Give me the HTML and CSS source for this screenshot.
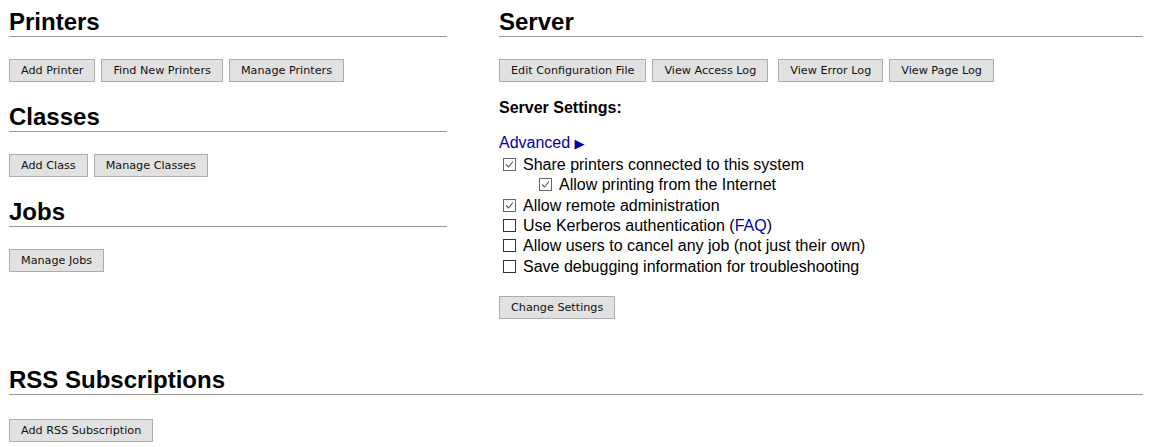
FILE: index.html
```html
<!DOCTYPE html>
<html>
<head>
<meta charset="utf-8">
<title>Administration - CUPS</title>
<link rel="stylesheet" href="styles.css">
</head>
<body>
<div class="page">
  <div class="columns">
    <div class="col-left">
      <section class="section">
        <h2 class="title">Printers</h2>
        <div class="buttons">
          <button class="btn">Add Printer</button>
          <button class="btn">Find New Printers</button>
          <button class="btn">Manage Printers</button>
        </div>
      </section>
      <section class="section">
        <h2 class="title">Classes</h2>
        <div class="buttons">
          <button class="btn">Add Class</button>
          <button class="btn">Manage Classes</button>
        </div>
      </section>
      <section class="section">
        <h2 class="title">Jobs</h2>
        <div class="buttons">
          <button class="btn">Manage Jobs</button>
        </div>
      </section>
    </div>
    <div class="col-right">
      <h2 class="title">Server</h2>
      <div class="buttons">
        <button class="btn">Edit Configuration File</button>
        <button class="btn">View Access Log</button>
        <button class="btn wide-gap">View Error Log</button>
        <button class="btn">View Page Log</button>
      </div>
      <p class="settings-title">Server Settings:</p>
      <div class="settings">
        <div class="row"><a class="link" href="#">Advanced&nbsp;<span class="tri">&#9654;</span></a></div>
        <div class="row opt"><svg class="cb" viewBox="0 0 13 13" width="13" height="13"><rect x="0.5" y="0.5" width="12" height="12" fill="#fff" stroke="#666"/><polyline points="3,6.5 5.5,9 10,3.5" fill="none" stroke="#555" stroke-width="1.1"/></svg>Share printers connected to this system</div>
        <div class="row opt sub"><svg class="cb" viewBox="0 0 13 13" width="13" height="13"><rect x="0.5" y="0.5" width="12" height="12" fill="#fff" stroke="#666"/><polyline points="3,6.5 5.5,9 10,3.5" fill="none" stroke="#555" stroke-width="1.1"/></svg>Allow printing from the Internet</div>
        <div class="row opt"><svg class="cb" viewBox="0 0 13 13" width="13" height="13"><rect x="0.5" y="0.5" width="12" height="12" fill="#fff" stroke="#666"/><polyline points="3,6.5 5.5,9 10,3.5" fill="none" stroke="#555" stroke-width="1.1"/></svg>Allow remote administration</div>
        <div class="row opt"><svg class="cb" viewBox="0 0 13 13" width="13" height="13"><rect x="0.5" y="0.5" width="12" height="12" fill="#fff" stroke="#333"/></svg>Use Kerberos authentication (<a class="link" href="#">FAQ</a>)</div>
        <div class="row opt"><svg class="cb" viewBox="0 0 13 13" width="13" height="13"><rect x="0.5" y="0.5" width="12" height="12" fill="#fff" stroke="#333"/></svg>Allow users to cancel any job (not just their own)</div>
        <div class="row opt"><svg class="cb" viewBox="0 0 13 13" width="13" height="13"><rect x="0.5" y="0.5" width="12" height="12" fill="#fff" stroke="#333"/></svg>Save debugging information for troubleshooting</div>
      </div>
      <div class="buttons submit">
        <button class="btn">Change Settings</button>
      </div>
    </div>
  </div>
  <section class="rss">
    <h2 class="title">RSS Subscriptions</h2>
    <div class="buttons rss-buttons">
      <button class="btn">Add RSS Subscription</button>
    </div>
  </section>
</div>
</body>
</html>
```

FILE: styles.css
```css
html, body {
  margin: 0;
  padding: 0;
  background: #fff;
}
body {
  font-family: "Liberation Sans", Arial, sans-serif;
  font-size: 16px;
  color: #000;
}
.page {
  padding: 8px 10px 0 9px;
}
.columns {
  display: grid;
  grid-template-columns: 438px 644px;
  column-gap: 52px;
  align-items: start;
}
.title {
  margin: 0;
  font-size: 24px;
  font-weight: bold;
  line-height: 28px;
  border-bottom: 1px solid #9a9a9a;
}
.section + .section {
  margin-top: 21px;
}
.buttons {
  display: flex;
  gap: 6px;
  margin-top: 22px;
}
.btn {
  box-sizing: border-box;
  height: 23px;
  padding: 0 11px;
  margin: 0;
  border: 1px solid #adadad;
  background: #e1e1e1;
  color: #111;
  font-family: "DejaVu Sans", Verdana, sans-serif;
  font-size: 11.2px;
  line-height: 21px;
  border-radius: 0;
}
.wide-gap {
  margin-left: 4px;
}
.settings-title {
  margin: 17px 0 0 0;
  font-weight: bold;
  font-size: 16px;
  line-height: 18.4px;
}
.settings {
  margin-top: 16px;
  line-height: 20.4px;
}
.row {
  white-space: nowrap;
}
.opt {
  padding-left: 4px;
}
.sub {
  padding-left: 40px;
}
.cb {
  vertical-align: -1px;
  margin-right: 7px;
}
.link {
  color: #0000a8;
  text-decoration: none;
}
.tri {
  font-size: 13px;
  font-family: "DejaVu Sans", sans-serif;
}
.submit {
  margin-top: 19px;
}
.rss {
  margin-top: 47px;
}
.rss-buttons {
  margin-top: 24px;
}
```
